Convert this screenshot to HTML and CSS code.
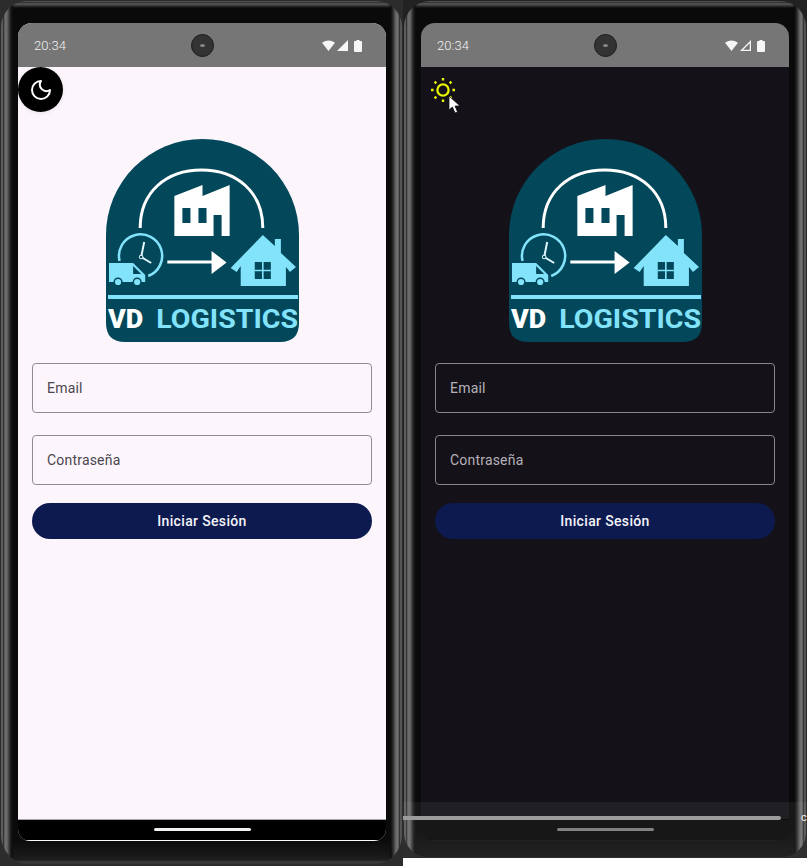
FILE: index.html
```html
<!DOCTYPE html>
<html lang="es">
<head>
<meta charset="utf-8">
<title>VD Logistics</title>
<link rel="stylesheet" href="styles.css">
</head>
<body>
<svg class="defs" width="0" height="0" aria-hidden="true">
  <defs>
    <symbol id="logo" viewBox="6 4 193 203" preserveAspectRatio="none">
      <path class="l-bg" d="M6 188V100A96 96 0 0 1 198 100V188Q198 207 179 207H25Q6 207 6 188Z"/>
      <path class="l-arc" d="M40 93C40 57 66 35 101 35S162 57 162 93"/>
      <path class="l-white" d="M74 61L102 50V61L129 50V101H121V80H113V101H74Z"/>
      <rect class="l-bgfill" x="82" y="73" width="8" height="15"/>
      <rect class="l-bgfill" x="98" y="73" width="8" height="15"/>
      <path class="l-clock" d="M19.5 126A21.5 21.5 0 1 1 48 141"/>
      <path class="l-hand" d="M44 107L41 122L51 128"/>
      <circle class="l-hub" cx="41" cy="122" r="1.8"/>
      <path class="l-cyan" d="M9 128H33L45 140V147H9Z"/>
      <path class="l-bgfill" d="M33 131V139H41Z"/>
      <circle class="l-cyan l-wheel" cx="18" cy="147" r="3.8"/>
      <circle class="l-cyan l-wheel" cx="37" cy="147" r="3.8"/>
      <path class="l-shaft" d="M67 127H113"/>
      <path class="l-white" d="M111 116L126 127.5L111 139Z"/>
      <path class="l-cyan" d="M130 133L162 100L174 111V104H180V118L195 132L189 137L185 132V151H140V131L136 137Z"/>
      <path class="l-bgfill" d="M154 127H170V144H154Z"/>
      <path class="l-pane" d="M162 127V144M154 135.5H170"/>
      <rect class="l-cyan" x="8" y="160" width="189" height="4"/>
      <text class="l-text l-vd" x="8" y="193" textLength="35" lengthAdjust="spacingAndGlyphs">VD</text>
      <text class="l-text" x="56" y="193" textLength="141" lengthAdjust="spacingAndGlyphs">LOGISTICS</text>
    </symbol>
  </defs>
</svg>
<main class="stage">
  <section class="phone">
    <div class="case">
      <div class="screen screen-light">
        <header class="statusbar">
          <span class="time">20:34</span>
          <span class="camera"><i class="lens"></i></span>
          <span class="sys">
            <svg class="sys-ic" width="13" height="11" viewBox="0 0 13 11"><path d="M0 2.8Q6.5 -1.8 13 2.8L6.5 11Z"/></svg>
            <svg class="sys-ic" width="11" height="11" viewBox="0 0 11 11"><path d="M11 0V11H0Z"/></svg>
            <svg class="sys-ic" width="8" height="12" viewBox="0 0 8 12"><path d="M2.5 0H5.5V1H7Q8 1 8 2V11Q8 12 7 12H1Q0 12 0 11V2Q0 1 1 1H2.5Z"/></svg>
          </span>
        </header>
        <div class="content">
          <button class="theme theme-moon" aria-label="Modo oscuro">
            <svg width="24" height="24" viewBox="0 0 24 24"><path d="M12 3a6.5 6.5 0 0 0 9 9 9 9 0 1 1-9-9Z"/></svg>
          </button>
          <svg class="logo" width="194" height="203"><use href="#logo"/></svg>
          <div class="field"><span>Email</span></div>
          <div class="field"><span>Contraseña</span></div>
          <div class="submit">Iniciar Sesión</div>
        </div>
        <footer class="navbar"><i class="handle"></i></footer>
      </div>
    </div>
  </section>
  <section class="phone phone-dark">
    <div class="case">
      <div class="screen screen-dark">
        <header class="statusbar">
          <span class="time">20:34</span>
          <span class="camera"><i class="lens"></i></span>
          <span class="sys">
            <svg class="sys-ic" width="13" height="11" viewBox="0 0 13 11"><path d="M0 2.8Q6.5 -1.8 13 2.8L6.5 11Z"/></svg>
            <svg class="sys-ic" width="11" height="11" viewBox="0 0 11 11"><path fill-rule="evenodd" d="M11 0V11H0ZM9.7 3.2L3.2 9.7H9.7Z"/></svg>
            <svg class="sys-ic" width="8" height="12" viewBox="0 0 8 12"><path d="M2.5 0H5.5V1H7Q8 1 8 2V11Q8 12 7 12H1Q0 12 0 11V2Q0 1 1 1H2.5Z"/></svg>
          </span>
        </header>
        <div class="content">
          <button class="theme theme-sun" aria-label="Modo claro">
            <svg width="26" height="26" viewBox="0 0 26 26"><circle class="sun-core" cx="13" cy="13" r="5.6"/><path class="sun-rays" d="M13 1V3.6M13 22.4V25M1 13H3.6M22.4 13H25M4.6 4.6L6.3 6.3M19.7 19.7L21.4 21.4M4.6 21.4L6.3 19.7M19.7 6.3L21.4 4.6"/></svg>
          </button>
          <svg class="cursor" width="13" height="19" viewBox="0 0 13 19"><path d="M1 1V15L4.4 12L7 18L9.6 17L7 11H12Z"/></svg>
          <svg class="logo" width="194" height="203"><use href="#logo"/></svg>
          <div class="field"><span>Email</span></div>
          <div class="field"><span>Contraseña</span></div>
          <div class="submit">Iniciar Sesión</div>
        </div>
        <footer class="navbar"><i class="handle"></i></footer>
      </div>
    </div>
    <div class="scrim"><i class="scrub"></i><span class="scrim-label">c</span></div>
  </section>
</main>
</body>
</html>
```
FILE: styles.css
```css
* { box-sizing: border-box; }
html, body { margin: 0; padding: 0; background: #fff; }
body { width: 807px; height: 866px; overflow: hidden; font-family: Roboto, "Liberation Sans", sans-serif; }
.defs { position: absolute; }

.stage { display: flex; align-items: flex-start; height: 866px; }

.phone { position: relative; flex: none; width: 403px; height: 866px; background: #2c2c2c; padding: 1px; overflow: hidden; }
.phone-dark { width: 404px; height: 858px; background: #222; }

.case {
  height: 100%;
  padding: 22px 16px 0 17px;
  border-radius: 26px 26px 30px 30px;
  background:
    linear-gradient(90deg, #4a4a4a 0, #707070 1px, #333 2.5px, #5c5c5c 3.5px, #727272 5px, #555 7px, #262626 9px, #0e0e0e 11px, transparent 13px, transparent calc(100% - 13px), #0e0e0e calc(100% - 11px), #2c2c2c calc(100% - 9px), #6a6a6a calc(100% - 6px), #747474 calc(100% - 4px), #333 calc(100% - 2.5px), #666 calc(100% - 1px), #444 100%),
    linear-gradient(180deg, #5a5a5a 0, #343434 1.5px, #5a5a5a 3px, #3a3a3a 4.5px, #0a0a0a 7px, #0a0a0a calc(100% - 26px), #161616 calc(100% - 12px), #1e1e1e calc(100% - 5px), #3c3c3c calc(100% - 3px), #2a2a2a 100%);
}
.phone-dark .case { padding: 22px 17px 0 17px; border-radius: 26px 26px 24px 24px; background:
    linear-gradient(90deg, #4a4a4a 0, #707070 1px, #333 2.5px, #5c5c5c 3.5px, #727272 5px, #555 7px, #262626 9px, #0e0e0e 11px, transparent 13px, transparent calc(100% - 13px), #0e0e0e calc(100% - 11px), #2c2c2c calc(100% - 9px), #6a6a6a calc(100% - 6px), #747474 calc(100% - 4px), #333 calc(100% - 2.5px), #666 calc(100% - 1px), #444 100%),
    linear-gradient(180deg, #5a5a5a 0, #343434 1.5px, #5a5a5a 3px, #3a3a3a 4.5px, #0a0a0a 7px, #0a0a0a calc(100% - 26px), #161616 100%); }

.screen { width: 368px; height: 818px; border-radius: 14px 14px 12px 12px; overflow: hidden; display: flex; flex-direction: column; }
.screen-light { background: #fcf6fc; }
.screen-dark { background: #141218; }

.statusbar { flex: none; position: relative; height: 44px; background: #767676; display: flex; align-items: center; justify-content: space-between; padding: 1px 24px 0 16px; color: #f2f2f2; font-size: 13px; }
.time { font-weight: 300; letter-spacing: .1px; }
.camera { position: absolute; left: 173px; top: 11px; width: 23px; height: 23px; border-radius: 50%; background: #333; border: 1px solid #1c1c1c; display: flex; align-items: center; justify-content: center; }
.lens { width: 5px; height: 3px; border-radius: 50%; background: #8a8a8a; }
.sys { display: flex; align-items: center; gap: 2px; }
.sys-ic { display: block; fill: #f6f6f6; }
.sys-ic:last-child { margin-left: 4px; }

.content { position: relative; flex: none; height: 753px; padding: 72px 14px 0 14px; display: flex; flex-direction: column; align-items: stretch; }
.logo { display: block; flex: none; align-self: flex-start; margin: 0 0 21px 74px; }

.theme { position: absolute; padding: 0; border: 0; display: flex; align-items: center; justify-content: center; background: none; }
.theme-moon { left: 0; top: 0; width: 45px; height: 45px; border-radius: 50%; background: #000; box-shadow: 0 1px 4px rgba(0,0,0,.08); }
.theme-moon path { fill: none; stroke: #fff; stroke-width: 2; stroke-linejoin: round; }
.theme-sun { left: 9px; top: 10px; width: 26px; height: 26px; }
.sun-core { fill: none; stroke: #e6f500; stroke-width: 2.3; }
.sun-rays { fill: none; stroke: #e6f500; stroke-width: 2.4; }
.cursor { position: absolute; left: 27px; top: 28px; }
.cursor path { fill: #fff; stroke: #111; stroke-width: .8; }

.field { height: 50px; margin-bottom: 22px; padding-left: 14px; border-radius: 4px; border: 1px solid #8f8a93; display: flex; align-items: center; font-size: 14px; letter-spacing: .2px; color: #4b4650; }
.field:nth-of-type(2) { margin-bottom: 18px; }
.screen-dark .field { border-color: #8a868e; color: #b5b0b8; }

.submit { height: 36px; border-radius: 18px; background: #0d1a4f; color: #f4f3f8; font-size: 14px; font-weight: 500; letter-spacing: .35px; display: flex; align-items: center; justify-content: center; }

.navbar { flex: none; height: 21px; background: #000; border-top: 1px solid #a9a4aa; display: flex; justify-content: center; padding-top: 8px; margin-top: -1px; }
.handle { width: 97px; height: 3px; border-radius: 2px; background: #f2f2f2; }
.screen-dark .navbar { border-top-color: #000; background: #0a0a0a; }
.screen-dark .handle { background: #7a7a7a; }

.scrim { position: absolute; left: 0; right: 0; top: 802px; height: 56px; background: rgba(255,255,255,.055); }
.scrub { position: absolute; left: 0; top: 14px; width: 378px; height: 4px; background: #9c9c9c; border-radius: 0 2px 2px 0; }
.scrim-label { position: absolute; left: 398px; top: 9px; color: #eee; font-size: 11px; }

.l-bg { fill: #03475a; }
.l-bgfill { fill: #03475a; }
.l-arc { fill: none; stroke: #fff; stroke-width: 3; }
.l-white { fill: #fff; }
.l-cyan { fill: #82e3fb; }
.l-wheel { stroke: #03475a; stroke-width: 1.4; }
.l-clock { fill: none; stroke: #82e3fb; stroke-width: 2.5; }
.l-hand { fill: none; stroke: #dff6fc; stroke-width: 2; }
.l-hub { fill: #03475a; stroke: #dff6fc; stroke-width: 1; }
.l-shaft { fill: none; stroke: #fff; stroke-width: 3; }
.l-pane { fill: none; stroke: #82e3fb; stroke-width: 1.6; }
.l-text { fill: #82e3fb; font-family: Roboto, sans-serif; font-weight: 700; font-size: 25px; }
.l-text.l-vd { fill: #fff; font-weight: 900; }
```
